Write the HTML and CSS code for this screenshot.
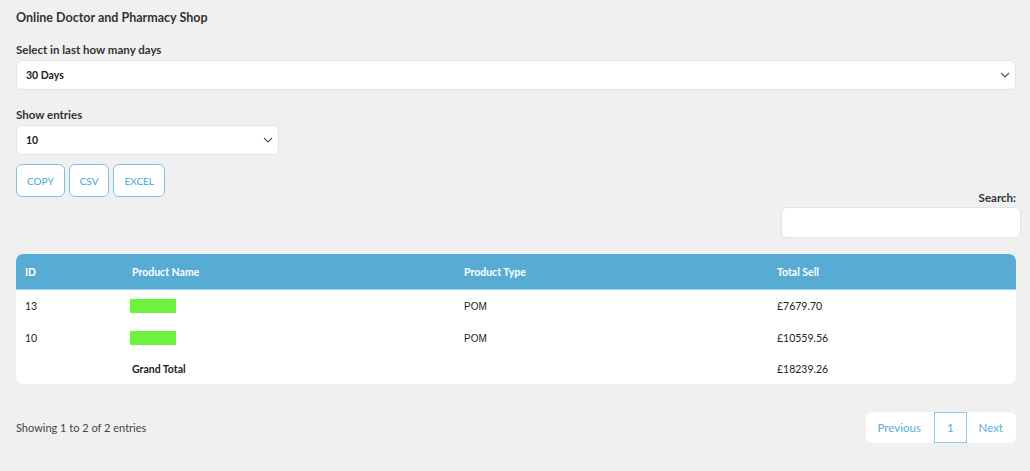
FILE: index.html
```html
<!DOCTYPE html>
<html lang="en">

<head>
    <meta charset="UTF-8">
    <meta name="viewport" content="width=device-width, initial-scale=1.0">
    <title>Online Doctor and Pharmacy Shop</title>
    <link rel="stylesheet" href="styles.css">
</head>

<body>
    <h1 class="title">Online Doctor and Pharmacy Shop</h1>

    <label class="field-label" for="days">Select in last how many days</label>
    <div class="select-wrap">
        <select id="days" class="select">
            <option>30 Days</option>
            <option>7 Days</option>
            <option>90 Days</option>
        </select>
        <svg class="chevron" width="10" height="6" viewBox="0 0 10 6"><path d="M1 1l4 4 4-4" fill="none" stroke="#555" stroke-width="1.2"/></svg>
    </div>

    <label class="field-label entries-label" for="entries">Show entries</label>
    <div class="select-wrap select-small">
        <select id="entries" class="select">
            <option>10</option>
            <option>25</option>
            <option>50</option>
        </select>
        <svg class="chevron" width="10" height="6" viewBox="0 0 10 6"><path d="M1 1l4 4 4-4" fill="none" stroke="#555" stroke-width="1.2"/></svg>
    </div>

    <div class="export-buttons">
        <button class="btn-export">COPY</button>
        <button class="btn-export">CSV</button>
        <button class="btn-export">EXCEL</button>
    </div>

    <div class="search">
        <label for="search">Search:</label>
        <input type="text" id="search" class="search-input">
    </div>

    <table class="sales">
        <thead>
            <tr>
                <th class="col-id">ID</th>
                <th class="col-name">Product Name</th>
                <th class="col-type">Product Type</th>
                <th>Total Sell</th>
            </tr>
        </thead>
        <tbody>
            <tr>
                <td>13</td>
                <td><span class="hidden-name"></span></td>
                <td class="type">POM</td>
                <td>£7679.70</td>
            </tr>
            <tr>
                <td>10</td>
                <td><span class="hidden-name"></span></td>
                <td class="type">POM</td>
                <td>£10559.56</td>
            </tr>
            <tr class="total">
                <td></td>
                <td><strong>Grand Total</strong></td>
                <td></td>
                <td>£18239.26</td>
            </tr>
        </tbody>
    </table>

    <div class="table-footer">
        <span class="info">Showing 1 to 2 of 2 entries</span>
        <div class="pager">
            <a href="#" class="page">Previous</a>
            <a href="#" class="page current">1</a>
            <a href="#" class="page">Next</a>
        </div>
    </div>
</body>

</html>
```

FILE: styles.css
```css
body {
    font-family: Lato, "Liberation Sans", sans-serif;
    color: #333;
    background-color: #f0f0f0;
    margin: 0;
    padding: 0 14px 0 16px;
    font-size: 11.5px;
}

.title {
    font-size: 12.5px;
    font-weight: 700;
    margin: 0;
    padding-top: 10px;
    line-height: 16px;
}

.field-label {
    display: block;
    font-weight: 700;
    margin-top: 16px;
    line-height: 16px;
}

.entries-label {
    margin-top: 17px;
}

.select-wrap {
    position: relative;
    margin-top: 2px;
    width: 1000px;
}

.select-small {
    width: 263px;
}

.select {
    appearance: none;
    display: block;
    width: 100%;
    height: 30px;
    padding: 0 9px;
    border: 1px solid #e3e3e3;
    border-radius: 6px;
    background: #fff;
    font-family: inherit;
    font-size: 10.5px;
    font-weight: 700;
    color: #222;
}

.chevron {
    position: absolute;
    right: 6px;
    top: 12px;
}

.export-buttons {
    display: flex;
    gap: 4px;
    margin-top: 9px;
}

.btn-export {
    height: 33px;
    padding: 0 10px;
    background: #fff;
    border: 1px solid #7cc3e4;
    border-radius: 6px;
    color: #3fa6d6;
    font-family: inherit;
    font-size: 10px;
}

.search {
    display: flex;
    flex-direction: column;
    align-items: flex-end;
    margin-top: -7px;
    margin-right: -5px;
}

.search label {
    font-weight: 700;
    line-height: 16px;
    padding-right: 5px;
}

.search-input {
    width: 240px;
    height: 31px;
    margin-top: 1px;
    box-sizing: border-box;
    border: 1px solid #e3e3e3;
    border-radius: 6px;
    background: #fff;
}

.sales {
    width: 1000px;
    margin-top: 16px;
    table-layout: fixed;
    border-collapse: separate;
    border-spacing: 0;
    background: #fff;
    border-radius: 7px;
    overflow: hidden;
}

.sales th {
    background: #58acd4;
    color: #fff;
    text-align: left;
    font-weight: 700;
    font-size: 10.5px;
    height: 36px;
    padding: 0 9px;
    border-bottom: 1px solid #9dd0e8;
    box-sizing: border-box;
}

.col-id {
    width: 107px;
}

.col-name {
    width: 332px;
}

.col-type {
    width: 313px;
}

.sales td {
    height: 32px;
    padding: 0 9px;
    font-size: 10.5px;
    color: #222;
}

.sales .total td {
    height: 30px;
}

.sales td.type {
    font-family: "Liberation Sans", Arial, sans-serif;
    font-size: 10px;
}

.hidden-name {
    display: inline-block;
    width: 46px;
    height: 14px;
    margin-left: -2px;
    vertical-align: middle;
    background: #6df23f;
    filter: blur(0.7px);
}

.total strong {
    font-weight: 700;
}

.table-footer {
    display: flex;
    justify-content: space-between;
    align-items: center;
    margin-top: 28px;
    width: 1000px;
}

.info {
    font-size: 11px;
    color: #444;
}

.pager {
    display: flex;
    background: #fff;
    border-radius: 6px;
    height: 31px;
}

.page {
    display: flex;
    align-items: center;
    padding: 0 13px 0 12px;
    color: #5aaed8;
    text-decoration: none;
    font-size: 11.5px;
}

.page.current {
    border: 1px solid #8ac8e6;
    padding: 0 12px;
}
```
